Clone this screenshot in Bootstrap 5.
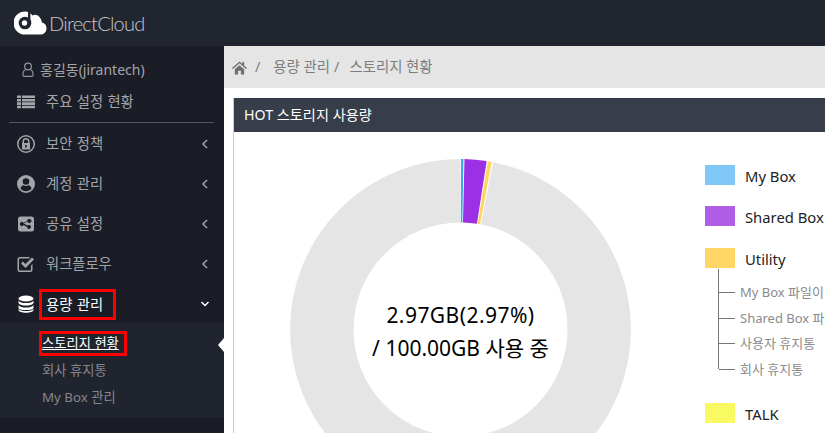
<!DOCTYPE html>
<html lang="ko">
<head>
<meta charset="utf-8">
<title>DirectCloud</title>
<link href="https://cdn.jsdelivr.net/npm/bootstrap@5.3.0/dist/css/bootstrap.min.css" rel="stylesheet">
<style>
html,body{height:433px;overflow:hidden;background:#fff}
body{font-family:"Noto Sans","Noto Sans CJK KR",sans-serif;font-size:14px;color:#222}
.top-strip{height:46px;background:#212530;padding-left:14px}
.brand-name{font-family:"Lato","Noto Sans",sans-serif;font-weight:300;font-size:20px;letter-spacing:-.75px;color:#c6c8cc;margin-left:2px}
.frame{height:387px}
.side{width:224px;flex:none;background:#1a1d26;color:#a3a5aa;position:relative}
.who{height:23px;margin-top:12px;padding-left:22px;gap:6px;font-size:14px}
.entry{height:40px;padding:2px 15px 0 17px;font-size:14.3px;word-spacing:.7px;color:#a3a5aa}
.entry.first{height:35px;margin-top:3px;padding-top:0}
.entry .ico{width:18px;height:18px;flex:none;margin-right:11px;fill:#a3a5aa}
.entry .chev{width:8px;height:10px;margin-left:auto;stroke:#a3a5aa;fill:none;stroke-width:1.5}
.entry.on{color:#fff;padding-top:2px}
.entry.on .ico{fill:#fff}
.entry.on .chev{stroke:#fff;width:10px;margin-right:-1px}
.rule{height:1px;background:#54565d;margin:3px 10px 0 9px}
.red-box{border:3px solid #f00;padding:0 10px 0 4px;line-height:25px;margin-left:-7px}
.subs{background:#20242e;height:95px;padding:8px 0 0 42px;font-size:13.3px;color:#84868d;position:relative}
.subs .sub-item{height:27.5px;display:flex;align-items:center}
.subs .sub-item.cur{color:#fff;height:25px;margin-bottom:1px}
.cur-box{border:3px solid #f00;line-height:19px;margin-left:-3px;padding-right:5px;text-decoration:underline}
.pointer{position:absolute;right:0;top:15px;border:7px solid transparent;border-left-width:0;border-right:6px solid #fff}
.main-area{flex:1;min-width:0}
.crumbs{height:42px;background:#e5e5e5;padding-left:8px;color:#7d7d7d;font-size:14.4px}
.crumbs svg{width:15px;height:15px;fill:#6f6f6f;margin-right:8px}
.crumbs .slash{margin:0 10px 0 0}
.crumbs .slash.wide{margin-right:9px}
.crumbs .lbl{margin-right:4px}
.hot-panel{margin:10px 0 0 9px;border-left:1px solid #ccc;height:335px;width:600px;overflow:hidden}
.hot-title{height:34px;margin-left:-1px;background:#383d4a;color:#fff;padding-left:11px;font-size:14.2px;line-height:1}
.hot-body{position:relative}
.donut-wrap{width:341px;height:341px;margin:27px 0 0 56px;flex:none;position:relative}
.donut-wrap svg{display:block;width:341px;height:341px}
.donut-text{position:absolute;left:0;right:0;top:140px;text-align:center;font-size:21px;line-height:33px;color:#000;white-space:nowrap}
.donut-text span{letter-spacing:.45px}
.legend{margin:33px 0 0 74px;white-space:nowrap;width:125px;flex:none;overflow:hidden}
.leg-row{display:flex;align-items:center;height:20px;font-size:14.8px;color:#222;margin-bottom:21px}
.leg-row i{display:block;width:30px;height:20px;margin-right:10px;flex:none}
.leg-row b{font-weight:400;padding-top:2px}
.leg-row.util{margin-bottom:0;margin-top:22px}
.tree{position:relative;margin:12px 0 21px 13px;padding-left:22px;font-size:13px;color:#8b8b8b}
.tree div{height:25.6px;line-height:25.6px;position:relative}
.tree div::before{content:"";position:absolute;left:-21px;width:16px;top:12px;border-top:1px solid #777}
.tree::before{content:"";position:absolute;left:0;top:-11px;height:100px;border-left:1px solid #777}
</style>
</head>
<body>
<div class="top-strip d-flex align-items-center">
<svg width="33" height="24" viewBox="0 0 33 24"><path fill="#fff" d="M11 .5a11.500 11.500 0 0 0 0 23h15.500a6 6 0 0 0 6-6.300 6 6 0 0 0-4.500-5.700C27 7 24.500 3.800 21 3.800c-1 0-1.700.2-2.500.6C16.500 2 14 .5 11 .5z"/><circle cx="11" cy="12" r="6.300" fill="#212530"/><circle cx="10.500" cy="12" r="2.700" fill="#fff"/><rect x="14" y="0" width="2.400" height="12" fill="#212530"/></svg>
<span class="brand-name">DirectCloud</span>
</div>
<div class="frame d-flex">
<div class="side">
<div class="who d-flex align-items-center"><svg width="12" height="15" viewBox="0 0 12 15" fill="none" stroke="#8f93a0" stroke-width="1.200"><circle cx="6" cy="4.500" r="3.400"/><path d="M3.500 7.500C1.800 8.300.9 10 .9 13.200c0 .8.400 1.200 1.100 1.200h8c.7 0 1.100-.4 1.100-1.200 0-3.200-.9-4.900-2.600-5.700"/></svg><span>홍길동(jirantech)</span></div>
<div class="entry first d-flex align-items-center"><svg class="ico" viewBox="0 0 18 14"><path d="M0 .5h4v2.600H0zM5 .5h13v2.600H5zM0 3.900h4v2.600H0zM5 3.900h13v2.600H5zM0 7.300h4v2.600H0zM5 7.300h13v2.600H5zM0 10.700h4v2.600H0zM5 10.700h13v2.600H5z"/></svg><span>주요 설정 현황</span></div>
<div class="rule"></div>
<div class="entry d-flex align-items-center"><svg class="ico" viewBox="0 0 18 18"><path fill-rule="evenodd" d="M9 0a9 9 0 1 1 0 18A9 9 0 0 1 9 0zm0 1.500a7.500 7.500 0 1 0 0 15 7.500 7.500 0 0 0 0-15zM9 3a3.500 3.500 0 0 1 3.500 3.500V8h.5v6.500H5V8h.5V6.500A3.500 3.500 0 0 1 9 3zm0 1.500a2 2 0 0 0-2 2V8h4V6.500a2 2 0 0 0-2-2zM8.200 10v2.500h1.600V10z"/></svg><span>보안 정책</span><svg class="chev" viewBox="0 0 8 10"><path d="M6 1 2 5l4 4"/></svg></div>
<div class="entry d-flex align-items-center"><svg class="ico" viewBox="0 0 18 18"><path fill-rule="evenodd" d="M9 0a9 9 0 1 1 0 18A9 9 0 0 1 9 0zm0 3.200A3.300 3.300 0 1 0 9 9.800 3.300 3.300 0 0 0 9 3.200zM3.500 13.500C4.700 15.300 6.700 16.300 9 16.300s4.300-1 5.500-2.800c-.4-1.800-1.500-3-3-3.200-.7.500-1.500.8-2.500.8s-1.800-.3-2.500-.8c-1.500.2-2.600 1.400-3 3.200z"/></svg><span>계정 관리</span><svg class="chev" viewBox="0 0 8 10"><path d="M6 1 2 5l4 4"/></svg></div>
<div class="entry d-flex align-items-center"><svg class="ico" viewBox="0 0 18 18"><path fill-rule="evenodd" d="M3.500 1.500h11a2.500 2.500 0 0 1 2.500 2.500v10a2.500 2.500 0 0 1-2.500 2.500h-11A2.500 2.500 0 0 1 1 14V4a2.500 2.500 0 0 1 2.500-2.500zM12 4a2 2 0 0 0-2 2l-3.500 1.900a2 2 0 1 0 0 2.200L10 12a2 2 0 1 0 .6-1.400L7.100 8.800v-.6l3.500-1.800A2 2 0 1 0 12 4z"/></svg><span>공유 설정</span><svg class="chev" viewBox="0 0 8 10"><path d="M6 1 2 5l4 4"/></svg></div>
<div class="entry d-flex align-items-center"><svg class="ico" viewBox="0 0 18 18"><path fill-rule="evenodd" d="M3 2h9.500v1.500H3A1 1 0 0 0 2 4.500v10a1 1 0 0 0 1 1h10a1 1 0 0 0 1-1v-4l1.500-1.500v5.500A2.500 2.500 0 0 1 13 17H3a2.500 2.500 0 0 1-2.500-2.500v-10A2.500 2.500 0 0 1 3 2z"/><path d="M4 8.500 6 6.500l2.500 2.500L15 2.500 17 4.500l-8.500 8.500z"/></svg><span>워크플로우</span><svg class="chev" viewBox="0 0 8 10"><path d="M6 1 2 5l4 4"/></svg></div>
<div class="entry on d-flex align-items-center"><svg class="ico" viewBox="0 0 18 18"><ellipse cx="9" cy="3.500" rx="7.500" ry="3"/><path d="M1.500 5.500C2.500 7.500 5.500 8 9 8s6.500-.5 7.500-2.500V8c-1 2-4 2.500-7.500 2.500S2.500 10 1.500 8zM1.500 10C2.500 12 5.500 12.500 9 12.500s6.500-.5 7.500-2.500v2.500C16.500 14.500 13 15 9 15s-7.500-.5-7.500-2.500zM1.500 14c1 1.600 4 2 7.500 2s6.500-.4 7.500-2v1c0 1.700-3.500 2.700-7.500 2.700S1.500 16.700 1.500 15z"/></svg><span class="red-box">용량 관리</span><svg class="chev" viewBox="0 0 10 8"><path d="M1.500 2 5 5.500 8.500 2"/></svg></div>
<div class="subs">
<div class="sub-item cur"><span class="cur-box">스토리지 현황</span></div>
<div class="sub-item">회사 휴지통</div>
<div class="sub-item">My Box 관리</div>
<span class="pointer"></span>
</div>
</div>
<div class="main-area">
<div class="crumbs d-flex align-items-center"><svg viewBox="0 0 16 15"><path d="M8 1 0 8l1 1 7-6 7 6 1-1-3-2.600V1.500h-2v2.200zM3 9.300V15h3.500v-4h3v4H13V9.300L8 5z"/></svg><span class="slash wide">/</span><span class="lbl ms-1">용량 관리</span><span class="slash">/</span><span>스토리지 현황</span></div>
<div class="hot-panel">
<div class="hot-title d-flex align-items-center">HOT 스토리지 사용량</div>
<div class="hot-body d-flex">
<div class="donut-wrap">
<svg viewBox="0 0 341 341"><g fill="none" stroke-width="63.500" transform="rotate(-90 170.500 170.500)">
<circle cx="170.500" cy="170.500" r="138.750" pathLength="360" stroke="#e5e5e5" stroke-dasharray="349 11" stroke-dashoffset="-11"/>
<circle cx="170.500" cy="170.500" r="138.750" pathLength="360" stroke="#36a9e8" stroke-dasharray="0.800 359.200" stroke-dashoffset="-0.200"/>
<circle cx="170.500" cy="170.500" r="138.750" pathLength="360" stroke="#9b30e6" stroke-dasharray="7.500 352.500" stroke-dashoffset="-1.350"/>
<circle cx="170.500" cy="170.500" r="138.750" pathLength="360" stroke="#ffd55f" stroke-dasharray="1.300 358.700" stroke-dashoffset="-9.250"/>
</g></svg>
<div class="donut-text"><span>2.97GB(2.97%)</span><br>/ 100.00GB 사용 중</div>
</div>
<div class="legend">
<div class="leg-row"><i style="background:#7fc8f8"></i><b>My Box</b></div>
<div class="leg-row"><i style="background:#b05ee8"></i><b>Shared Box</b></div>
<div class="leg-row util"><i style="background:#ffd666"></i><b>Utility</b></div>
<div class="tree"><div>My Box 파일이력</div><div>Shared Box 파일이력</div><div>사용자 휴지통</div><div>회사 휴지통</div></div>
<div class="leg-row talk"><i style="background:#f9f962"></i><b>TALK</b></div>
</div>
</div>
</div>
</div>
</div>
<script src="https://cdn.jsdelivr.net/npm/bootstrap@5.3.0/dist/js/bootstrap.bundle.min.js"></script>
</body>
</html>
